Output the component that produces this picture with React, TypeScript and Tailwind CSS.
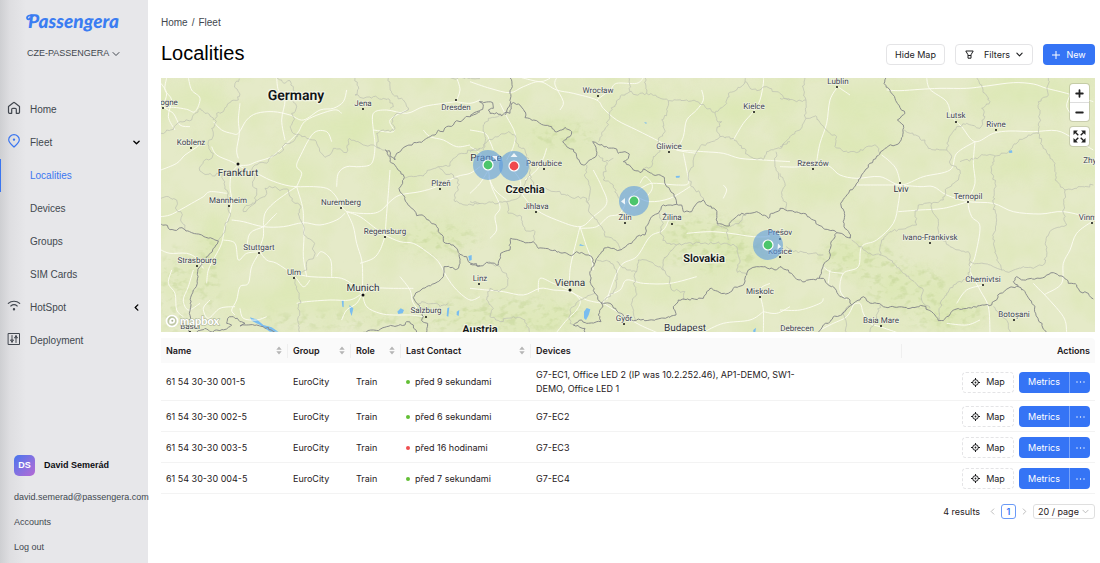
import React from "react";

type Pt = [number, number];

const parse = (s: string): Pt[] =>
  s.trim().split(/\s+/).map((p) => p.split(",").map(Number) as Pt);

/* Adds small deterministic wiggles so that borders look surveyed, not ruled. */
function rough(s: string, amp: number): string {
  const pts = parse(s);
  let seed = Math.round(pts[0][0] * 7 + pts[0][1] * 13) + 1;
  const rnd = () => {
    seed = (seed * 16807) % 2147483647;
    return seed / 2147483647 - 0.5;
  };
  rnd();
  let d = `M${pts[0][0]} ${pts[0][1]}`;
  for (let i = 1; i < pts.length; i++) {
    const [x0, y0] = pts[i - 1];
    const [x1, y1] = pts[i];
    const len = Math.hypot(x1 - x0, y1 - y0);
    const n = Math.max(1, Math.round(len / 7));
    for (let k = 1; k <= n; k++) {
      const t = k / n;
      const w = k === n ? 0 : amp;
      const x = x0 + (x1 - x0) * t + rnd() * w;
      const y = y0 + (y1 - y0) * t + rnd() * w;
      d += `L${x.toFixed(1)} ${y.toFixed(1)}`;
    }
  }
  return d;
}

/* Smooth curve through the points, for roads. */
function smooth(s: string): string {
  const p = parse(s);
  let d = `M${p[0][0]} ${p[0][1]}`;
  for (let i = 0; i < p.length - 1; i++) {
    const a = p[Math.max(0, i - 1)];
    const b = p[i];
    const c = p[i + 1];
    const e = p[Math.min(p.length - 1, i + 2)];
    d += `C${b[0] + (c[0] - a[0]) / 6} ${b[1] + (c[1] - a[1]) / 6} ${c[0] - (e[0] - b[0]) / 6} ${c[1] - (e[1] - b[1]) / 6} ${c[0]} ${c[1]}`;
  }
  return d;
}

interface Tile {
  x: number;
  countries: string[];
  regions: string[];
  roads: string[];
  water: string[];
}

const tiles: Tile[] = [
  {
    x: 160,
    countries: [
      "3,461 22,466 30,479 45,481 66,473 78,483 95,488 125,495 160,507 175,513 168,525 158,540 140,560 130,575 120,590 113,605 112,640 100,660 92,682 90,700 92,712 88,730 92,745 85,765 88,787",
      "110,787 135,775 150,785 170,780 200,777 215,765 200,760 203,745 220,740 232,745 240,755 255,760 240,768 260,765 290,765 310,770 335,780 345,787",
      "610,787 640,780 655,782 680,770 700,768 735,765 740,755 760,765 770,787",
      "800,787 803,760 785,752 790,740 780,715 760,683 775,665 800,650 825,640 850,620 852,590 870,593 890,598 900,580 897,553",
      "960,125 940,135 915,143 900,155 890,152 880,165 860,170 850,185 835,180 825,195 800,205 790,212 770,218 735,230 720,245 710,250 705,270 697,262 690,258 688,242 676,240 690,262 690,275 710,293 722,305 733,322 728,340 717,355 730,375 737,395 760,418 770,437 790,437 810,455 830,470 835,485 850,500 850,515 880,525 893,540 900,553 920,560 925,575 940,582 960,587",
    ],
    regions: [
      "238,26 225,40 228,55 240,72 235,90 215,92 200,110 190,125 170,130 165,160 155,175 160,195 145,215 150,240 160,250 155,265 130,275 118,295 130,310 150,310 165,318 185,300 190,330 195,350 205,370 198,390 205,410 210,440 195,465 190,490 175,513",
      "3,190 20,180 40,178 60,155 95,150 105,130 120,115 135,130 150,135 160,150",
      "350,23 365,30 372,40 390,32 400,60 415,72 398,90 410,110 395,130 402,150 390,170 400,190 415,192 440,205 465,210 485,250 495,262 510,255 520,235 545,240 560,248 568,205 590,215 610,225 640,225 660,235 676,240",
      "415,192 400,215 375,220 365,245 335,258 325,275 285,285 275,300 285,320 278,340 290,365 285,400 262,418 250,425",
      "250,425 255,410 285,400 300,385 318,375 315,355 345,350 360,362 385,360 390,380 405,400 420,405 418,440 430,465 432,495 460,515 462,560 440,575 440,600 415,610 400,625 410,650 420,690 415,740 418,787",
      "585,23 595,50 585,75 610,85 640,80 665,88 690,90 700,110 690,115",
      "685,23 690,50 700,75 730,90 740,110 745,120 705,135 695,160 705,175 690,185 670,180 650,190 655,215 650,225 660,235",
      "862,23 960,26",
      "733,325 760,320 790,318 810,300 835,290 870,288 880,265 905,250 960,235",
      "835,290 855,310 880,315 895,330 895,360 885,370 885,395 915,405 960,400",
      "3,385 25,380 50,390 50,420 65,430 62,450 75,465 78,483",
      "775,700 785,695 800,700 830,700 840,710 865,700",
    ],
    roads: [
      "3,40 20,70 12,110 40,130 60,165 90,170",
      "20,23 15,60 35,90 25,140 45,180",
      "3,115 40,112 80,118 105,125 120,85 95,60 85,23",
      "160,155 185,180 215,190 235,190 260,150 290,130 340,125 390,135 430,150 480,120 520,115 550,95 560,60",
      "240,100 235,150 238,190 230,240 235,265",
      "3,300 50,280 75,255 105,235 130,215",
      "155,230 170,255 215,275 235,285 265,285 290,275 335,260 370,230 412,190 440,150 520,120 545,130",
      "235,285 215,310 210,350 215,390 210,430 195,470 185,520 165,560 145,600 140,640",
      "235,285 260,300 290,310 330,330 375,345 410,350 460,350 500,355 525,375 545,410 560,425",
      "560,425 600,430 640,430 665,420 690,395 720,375 780,365 830,350 890,320 930,310 960,290",
      "560,425 580,470 590,520 605,570 608,620 607,665",
      "560,425 600,440 640,470 675,495 720,515 760,520 800,545 835,575 860,620 890,660 930,690 960,680",
      "555,430 530,450 480,465 430,458 370,470 310,470 250,455 215,450",
      "310,470 315,430 340,400 380,370 410,350",
      "310,470 310,500 300,540 320,570 350,580 400,615 430,650 450,630",
      "300,545 260,550 235,570 225,520 190,510",
      "300,545 275,590 265,640 240,650 230,690 215,720 225,735",
      "400,610 450,620 500,622 545,625 580,645 607,670 640,655 700,655 760,655",
      "607,670 570,690 510,690 440,695 410,700",
      "607,670 590,700 560,720 545,750",
      "607,670 620,710 660,730 700,735 750,735 790,740",
      "375,210 365,150 375,90 355,60 350,23",
      "640,180 640,130 680,120 740,130 790,110 850,100 888,95",
      "640,180 645,230 635,280 600,290 560,290 535,310 530,350",
      "640,180 700,185 690,150 740,120",
      "410,350 425,310 410,290 420,260 460,190 500,185 515,215",
      "410,350 425,400 430,430 430,460 432,500 430,560 440,620",
      "3,440 30,435 60,420 95,400 130,380 150,365 200,370",
      "3,540 30,550 80,550 110,565 130,595",
      "100,600 85,650 70,690 85,720 120,700",
      "35,600 25,640 45,670 50,720 70,740",
      "675,500 660,540 640,565 600,580",
      "675,500 680,430 685,370 690,300",
      "515,620 512,570 485,545 470,560",
      "795,740 760,700 750,660 720,620",
      "888,95 900,60 890,23",
      "888,95 930,100 960,90",
      "790,180 810,200 850,210 890,230 930,225",
      "150,690 130,715 145,745 180,715 225,710",
      "240,715 250,745 290,750 320,740",
      "350,430 330,450 310,470 270,490 260,540",
    ],
    water: [
      "270,742 290,748 310,765 335,772 355,785 330,785 300,765 275,752",
      "545,690 551,690 551,712 547,710",
      "568,705 580,715 575,738 570,725",
      "712,725 722,715 732,720 728,730 715,732",
      "862,715 868,712 865,740 860,738",
      "890,725 898,720 896,738 890,735",
      "925,558 935,555 935,570 928,573",
    ],
  },
  {
    x: 470,
    countries: [
      "0,137 20,125 38,118 40,105 28,95 50,96 68,98 70,115 55,120 60,130 80,128 95,138 105,128 120,130 125,100 145,102 160,118 168,135 165,143 200,152 220,165 245,170 255,185 275,180 285,172 305,185 300,200 278,215 290,230 310,238 320,260 340,285 350,280 365,268 380,255 378,232 368,215 390,225 410,230 440,237 445,250 465,245 478,252 475,265 460,275 478,285 490,300 510,308 520,297 545,310 583,322 590,350 600,360 612,372 620,403",
      "120,23 127,50 120,70 122,95 105,135",
      "620,403 580,405 565,430 545,440 528,470 525,495 500,500 485,520 450,540 410,533 395,545 380,565 373,582",
      "620,403 635,405 640,425 665,425 680,400 700,390 710,405 738,420 742,462 765,467 778,468 782,455 805,435 830,430 860,425 895,445 905,430 930,420 930,415",
      "0,582 30,588 50,577 85,585 92,550 120,540 122,505 145,510 175,518 190,515 205,535 240,540 265,545 290,550 305,557 320,545 365,560 373,582",
      "373,582 360,605 362,640 375,670 393,698",
      "393,698 420,700 445,728 485,750 540,750 600,742 618,735 610,710 625,690 700,685 710,665 725,655 750,668 775,670 790,655 820,645 830,615 835,600 860,590 885,590 915,600 930,590",
      "393,698 398,705 385,735 393,755 350,760 335,750 310,765 345,775 345,787",
    ],
    regions: [
      "475,23 480,65 455,75 435,105 420,125 410,170 395,190 385,215",
      "525,23 530,70 560,80 595,92 590,130 575,150 585,185 565,210 570,245 550,260 545,290 520,297",
      "480,65 505,75 530,70",
      "595,92 650,90 680,95 705,110 735,130 740,150 755,155 740,180 750,200 725,215 690,230 675,255 670,290 655,310 665,350 690,370 700,390",
      "735,130 750,115 770,100 775,70 800,60 825,35 840,55 870,60 890,50 915,65 960,90",
      "825,35 825,23",
      "750,200 790,205 815,235 850,265 880,268 890,245 930,235 960,215",
      "930,330 925,325 915,290 918,245",
      "40,240 45,200 40,165 55,145 95,138",
      "0,245 35,235 55,210 85,200 115,185 135,195 145,230 165,240 175,280 180,315 190,345 215,350 260,365 300,380 350,385 355,400 360,430 395,470 405,500 435,510 450,540",
      "350,285 345,320 360,350 355,400",
      "385,255 405,275 430,265",
      "410,275 400,330 430,345 440,370 445,385",
      "0,395 50,400 110,395 115,430 155,440 165,480 195,485 190,515",
      "110,395 150,380 180,315",
      "565,430 580,460 570,490 590,520 620,525",
      "620,525 650,520 700,520 770,520 800,530 810,570 800,600 830,615",
      "740,465 770,475 775,510",
      "620,525 600,545 580,570 580,600 600,630 605,660 645,665 640,690",
      "380,570 420,575 440,600 440,640 430,670 395,698",
      "440,575 470,600 500,605 505,570 540,575 580,600",
      "500,605 490,640 500,670 485,700 495,750",
      "50,577 90,590 115,625 110,650 85,665 60,655 50,690 70,715 60,740 90,755 130,740 165,750 180,787",
      "375,670 330,690 300,720 300,760 310,765",
      "830,430 810,455 780,470",
    ],
    roads: [
      "0,35 60,55 120,68 160,50 210,35 260,60 310,70 380,90 400,115 440,150 500,180 570,215 620,240 680,250",
      "155,23 210,35 240,25",
      "270,120 280,95 255,45 260,23",
      "380,90 420,60 440,40 500,40 520,23",
      "620,240 640,200 650,150 680,120 700,90 695,60",
      "640,250 650,300 655,340 620,345 560,340 530,345 480,380 450,430 415,440 380,470 330,475",
      "620,240 700,245 760,250 810,265 880,270 960,275",
      "790,210 820,160 850,125 870,90 880,40 880,23",
      "120,290 150,330 155,370 200,420 260,450 330,470 370,440 410,400 395,350 370,300",
      "330,470 340,500 350,530 365,570 370,600",
      "330,470 320,510 310,550 300,600 298,660",
      "55,300 30,340 0,370",
      "55,300 65,350 90,410 75,440 80,480 60,505",
      "165,330 200,300 220,265 230,235",
      "0,655 50,660 100,665 160,675 210,655 250,660 298,665 350,690 400,700",
      "298,660 250,640 210,625 205,665",
      "298,660 330,690 320,720 290,750 260,787",
      "400,700 410,680 450,660 470,630 520,640 600,640 680,620",
      "400,700 450,730 510,765 560,787",
      "650,490 720,485 780,490 850,500 900,500",
      "600,440 580,480 540,500 500,560 450,590 410,690",
      "880,787 880,720 870,660 900,640",
      "880,725 920,730 960,710",
      "880,725 840,750 760,760 700,787",
      "70,240 60,215 45,190 0,180",
      "110,270 130,230 135,190 110,140 90,100",
      "510,340 525,320 545,340 545,360 530,380",
      "0,230 30,250 50,280",
      "110,390 75,360 55,320",
      "500,380 540,395 600,385 660,350",
      "760,345 770,360 760,385",
    ],
    water: [
      "342,725 350,714 361,718 356,735 348,750 342,745",
      "330,522 345,528 328,527",
      "522,156 531,158 528,162",
      "617,318 630,317 628,323 618,323",
      "850,780 858,773 856,787 850,787",
    ],
  },
  {
    x: 780,
    countries: [
      "318,23 312,40 330,60 345,85 352,100 375,130 352,150 370,165 368,200 355,222 325,228 270,280 235,335 182,400 193,430 192,470 212,495 210,505",
      "0,415 30,422 70,430 100,450 130,475 170,488 212,503",
      "170,488 152,520 150,560 130,585 118,625",
      "0,590 25,600 50,628 75,635 100,628 118,625 130,625 140,640 165,655 180,680 205,685 215,705",
      "215,705 185,735 160,740 145,760 130,765 115,787",
      "215,705 240,690 250,680 265,695 290,700 310,710 350,712 390,715 430,708 445,720 455,725 475,752 490,752 520,720 580,710 635,705 660,670 690,652 715,650",
      "715,650 735,665 760,705 775,750 800,787",
      "715,650 700,635 710,620 730,630 780,625 820,608 850,620 865,640 890,645 900,665 925,670 940,687",
    ],
    regions: [
      "75,23 70,55 78,90 75,150 60,180 30,200 0,230",
      "0,85 25,90 50,95 78,90",
      "78,145 110,140 125,165 145,185 170,200 165,230 190,245 230,248 260,230 290,228 300,250",
      "0,310 15,340 5,380 20,400 18,420",
      "372,180 400,195 435,210 445,235 500,240 508,200 530,170 560,160 600,175 615,140 605,115 630,95 615,70 605,45 590,23",
      "500,240 515,260 510,280 540,300 535,330 500,355 490,390 455,400 415,405 405,440 410,465 330,485 305,510 300,555 265,550 245,530 215,510",
      "540,275 580,268 610,255 645,258 680,250 715,215 745,195 775,190 780,130 775,95 805,75 805,23",
      "645,258 635,300 645,340 640,400 650,450 640,500 650,570 665,600 690,605 730,590 760,595 795,580 800,500 815,480 860,465 850,430 855,360 825,330 825,280 790,235 775,190",
      "855,360 890,355 940,345",
      "455,400 460,430 475,455 475,490 510,530 565,545 570,575 640,590 665,600",
      "570,575 565,625 520,645 500,670 485,690 475,752",
      "300,555 330,570 370,610 395,630 430,660 425,690 450,715",
      "210,705 190,725 200,787",
      "640,710 660,735 685,760 690,787",
      "300,705 290,740 270,787",
      "18,530 40,545 80,548 130,555",
    ],
    roads: [
      "320,60 360,62 420,58 480,55 560,55 620,48 700,38 760,42 800,55 860,70 940,95",
      "440,23 450,58 500,95 515,140 545,170 585,215 640,190 690,183 760,185 830,182 880,205 940,240",
      "585,215 580,280 585,340 565,395 575,440 600,470 585,560 570,600 600,660 625,710 630,787",
      "0,290 60,290 110,275 150,290 180,315 230,325 300,320 362,345 430,320 510,300 530,250 585,215",
      "362,345 300,345 230,345",
      "362,345 420,350 460,350 500,375 565,395 640,400 700,425 780,432 850,425 940,445",
      "362,345 350,300 330,275 305,255",
      "362,345 355,400 340,460 290,510 245,530 235,590 190,610 180,660 200,690",
      "355,425 420,420 490,415 565,395",
      "173,50 150,90 140,160 120,220 110,275",
      "173,50 210,75",
      "130,590 150,605 190,610",
      "150,600 145,640",
      "0,720 60,720 120,700 130,685",
      "215,705 240,700 250,730 270,760 300,770 350,787",
      "120,780 160,760 200,740 220,705",
      "935,455 890,490 870,540 850,580 845,640 800,670 790,670 760,640",
      "790,670 850,740 860,787",
      "500,760 560,765 600,750",
      "530,700 560,660 610,645",
      "880,140 860,110 870,75",
    ],
    water: ["686,242 696,241 697,248 688,249"],
  },
];

interface Place {
  name: string;
  x: number;
  y: number;
  size: number;
  bold?: boolean;
  dot?: Pt;
}

const places: Place[] = [
  { name: "Germany", x: 296, y: 100, size: 14, bold: true },
  { name: "Czechia", x: 525, y: 193, size: 11, bold: true },
  { name: "Slovakia", x: 704, y: 262, size: 11, bold: true },
  { name: "Austria", x: 480, y: 333, size: 11, bold: true },
  { name: "ogne", x: 169, y: 105, size: 8, dot: [163, 108] },
  { name: "Koblenz", x: 191, y: 145, size: 8, dot: [191, 148] },
  { name: "Frankfurt", x: 238, y: 176, size: 10, dot: [238, 164] },
  { name: "Mannheim", x: 228, y: 203, size: 8, dot: [229, 206] },
  { name: "Strasbourg", x: 197, y: 263, size: 8, dot: [197, 266] },
  { name: "Stuttgart", x: 259, y: 250, size: 8, dot: [259, 253] },
  { name: "Ulm", x: 294, y: 275, size: 8, dot: [294, 278] },
  { name: "Munich", x: 363, y: 291, size: 10, dot: [363, 295] },
  { name: "Nuremberg", x: 341, y: 205, size: 8, dot: [341, 208] },
  { name: "Regensburg", x: 385, y: 234, size: 8, dot: [385, 237] },
  { name: "Jena", x: 363, y: 106, size: 8, dot: [363, 109] },
  { name: "Dresden", x: 456, y: 110, size: 8, dot: [456, 100] },
  { name: "Plzeň", x: 441, y: 186, size: 8, dot: [440, 189] },
  { name: "Salzburg", x: 426, y: 313, size: 8, dot: [426, 317] },
  { name: "Basel", x: 190, y: 329, size: 8, dot: [190, 332] },
  { name: "Prague", x: 486, y: 161, size: 10 },
  { name: "Pardubice", x: 544, y: 166, size: 8, dot: [544, 169] },
  { name: "Jihlava", x: 536, y: 209, size: 8, dot: [536, 212] },
  { name: "Wrocław", x: 598, y: 93, size: 8, dot: [598, 96] },
  { name: "Gliwice", x: 669, y: 149, size: 8, dot: [669, 152] },
  { name: "Kielce", x: 754, y: 109, size: 8, dot: [754, 112] },
  { name: "Zlín", x: 625, y: 220, size: 8, dot: [625, 223] },
  { name: "Žilina", x: 672, y: 220, size: 8, dot: [672, 224] },
  { name: "Prešov", x: 780, y: 235, size: 8, dot: [780, 239] },
  { name: "Košice", x: 780, y: 254, size: 8, dot: [780, 257] },
  { name: "Linz", x: 480, y: 281, size: 8, dot: [479, 284] },
  { name: "Vienna", x: 570, y: 286, size: 10, dot: [570, 290] },
  { name: "Győr", x: 624, y: 321, size: 8, dot: [624, 324] },
  { name: "Budapest", x: 685, y: 331, size: 10 },
  { name: "Miskolc", x: 760, y: 294, size: 8, dot: [760, 297] },
  { name: "Debrecen", x: 797, y: 331, size: 8 },
  { name: "Lublin", x: 838, y: 84, size: 8, dot: [837, 87] },
  { name: "Lutsk", x: 956, y: 118, size: 8, dot: [956, 122] },
  { name: "Rivne", x: 996, y: 127, size: 8, dot: [996, 130] },
  { name: "Rzeszów", x: 813, y: 166, size: 8, dot: [813, 169] },
  { name: "Lviv", x: 901, y: 192, size: 9, dot: [900, 183] },
  { name: "Ternopil", x: 968, y: 199, size: 8, dot: [968, 202] },
  { name: "Ivano-Frankivsk", x: 930, y: 240, size: 8, dot: [930, 243] },
  { name: "Chernivtsi", x: 983, y: 282, size: 8, dot: [983, 285] },
  { name: "Botoșani", x: 1014, y: 317, size: 8, dot: [1014, 320] },
  { name: "Baia Mare", x: 881, y: 323, size: 8, dot: [881, 326] },
  { name: "Zhytomyr", x: 1100, y: 163, size: 8 },
  { name: "Vinnytsia", x: 1095, y: 220, size: 8, dot: [1092, 223] },
];

const forests: number[][] = [
  [190, 100, 40, 14], [345, 130, 60, 18], [300, 175, 30, 16], [215, 250, 16, 40],
  [430, 235, 44, 14], [300, 300, 90, 16], [460, 130, 50, 10], [540, 130, 45, 12],
  [575, 150, 30, 12], [640, 110, 40, 14], [720, 110, 34, 20], [700, 235, 50, 14],
  [735, 260, 46, 14], [510, 318, 80, 14], [640, 175, 28, 14], [660, 290, 30, 12],
  [870, 105, 50, 22], [820, 190, 40, 12], [860, 255, 34, 16], [905, 288, 40, 18],
  [1030, 95, 60, 20], [1000, 165, 46, 12], [945, 310, 34, 14], [775, 100, 30, 14],
  [1060, 165, 50, 10], [400, 170, 30, 12], [590, 245, 30, 10], [835, 140, 60, 12],
];

const ridges: number[][] = [
  [175, 290, 14, 44], [207, 275, 12, 40], [440, 240, 40, 16], [500, 314, 90, 18],
  [470, 318, 60, 14], [705, 228, 45, 12], [715, 252, 50, 18], [860, 260, 45, 18],
  [905, 285, 42, 22], [945, 315, 40, 14], [565, 135, 34, 12], [345, 320, 90, 8],
];

const markers = [
  { x: 488, y: 165, color: "#4cc56b", arrow: "M492 156h5v5z" },
  { x: 514, y: 166, color: "#f0484c", arrow: "M510.500 157l3.500-4 3.500 4z" },
  { x: 634, y: 201, color: "#4cc56b", arrow: "M625 198v6.500l-4-3z" },
  { x: 768, y: 245, color: "#4cc56b", arrow: "M778 243.500l3 3-3.500 3z" },
];

function MapView() {
  return (
    <section aria-label="Map" className="relative h-[254px] overflow-hidden bg-[#e5eac8]">
      <svg
        viewBox="161 78 934 254"
        preserveAspectRatio="xMidYMid slice"
        className="block h-full w-full"
        aria-hidden="true"
      >
        <defs>
          <filter id="soft" x="-50%" y="-50%" width="200%" height="200%">
            <feGaussianBlur stdDeviation="9" />
          </filter>
          <filter id="land" x="0" y="0" width="100%" height="100%" colorInterpolationFilters="sRGB">
            <feTurbulence type="fractalNoise" baseFrequency="0.03" numOctaves="3" seed="4" />
            <feColorMatrix values="0 0 0 0 0.84 0 0 0 0 0.9 0 0 0 0 0.66 2 0 0 0 -0.75" />
          </filter>
          <filter id="relief" x="-20%" y="-20%" width="140%" height="140%" colorInterpolationFilters="sRGB">
            <feTurbulence type="fractalNoise" baseFrequency="0.11 0.16" numOctaves="3" seed="9" result="n" />
            <feColorMatrix in="n" values="0 0 0 0 0.76 0 0 0 0 0.83 0 0 0 0 0.58 4 0 0 0 -2" result="c" />
            <feGaussianBlur in="SourceAlpha" stdDeviation="5" result="m" />
            <feComposite in="c" in2="m" operator="in" />
          </filter>
        </defs>
        <rect x="161" y="78" width="934" height="254" fill="#e5eac8" />
        <rect x="161" y="78" width="934" height="254" filter="url(#land)" opacity="0.4" />
        <g filter="url(#soft)" fill="#d8e7ac" opacity="0.45">
          {forests.map(([x, y, rx, ry]) => (
            <ellipse key={`${x}-${y}`} cx={x} cy={y} rx={rx} ry={ry} />
          ))}
        </g>
        <g filter="url(#relief)" opacity="0.5">
          {ridges.map(([x, y, rx, ry]) => (
            <ellipse key={`${x}-${y}`} cx={x} cy={y} rx={rx} ry={ry} />
          ))}
        </g>
        {tiles.map((t) => (
          <g key={t.x} transform={`translate(${t.x} 70) scale(0.33333)`} fill="none" strokeLinejoin="round">
            {t.water.map((w) => (
              <polygon key={w} points={w} fill="#79bdf0" />
            ))}
            {t.roads.map((r) => (
              <path key={r} d={smooth(r)} stroke="#fcfcf1" strokeWidth="3" opacity="0.95" />
            ))}
            {t.regions.map((r) => (
              <path key={r} d={rough(r, 8)} stroke="#b9bcb1" strokeWidth="2" />
            ))}
            {t.countries.map((c) => (
              <path key={c} d={rough(c, 6)} stroke="#87898b" strokeWidth="2.900" />
            ))}
          </g>
        ))}
        <g
          textAnchor="middle"
          textRendering="geometricPrecision"
          fontFamily="Roboto, 'Noto Sans', sans-serif"
          stroke="#f1f4e2"
          strokeLinejoin="round"
          paintOrder="stroke"
        >
          {places.map((p) => (
            <g key={p.name}>
              {p.dot && (
                <circle cx={p.dot[0]} cy={p.dot[1]} r={p.size > 9 ? 1.5 : 1} fill="#111" stroke="none" />
              )}
              <text
                x={p.x}
                y={p.y}
                fontSize={p.size}
                fontWeight={p.bold ? 600 : 400}
                fill={p.bold ? "#111418" : p.size > 8 ? "#30353f" : "#3f4452"}
                strokeWidth={p.bold ? 2.5 : 1.5}
              >
                {p.name}
              </text>
            </g>
          ))}
        </g>
        {markers.map((m) => (
          <g key={m.x}>
            <circle cx={m.x} cy={m.y} r="15" fill="#5b9be0" opacity="0.6" />
            <path d={m.arrow} fill="#fff" opacity="0.85" />
            <circle cx={m.x} cy={m.y} r="5" fill={m.color} stroke="#fff" strokeWidth="1.200" />
          </g>
        ))}
        <g>
          <circle cx="172" cy="321" r="5.500" fill="#9ba585" fillOpacity="0.5" stroke="#fff" strokeWidth="1.700" />
          <path d="M169.500 323.500c-.8-3.500.6-5.600 2.800-5.600a2.800 2.800 0 0 1 2.800 2.800c0 2.300-2.100 3.600-5.600 2.800z" fill="#fff" />
          <circle cx="172.300" cy="320.700" r="1" fill="#a5ad90" />
          <text
            x="180"
            y="325"
            fontFamily="Lato, sans-serif"
            fontWeight="900"
            fontSize="11"
            fill="#fff"
            stroke="#a3ab8e"
            strokeWidth="1"
            paintOrder="stroke"
          >
            mapbox
          </text>
        </g>
      </svg>
      <div className="absolute right-[6px] top-[6px] flex flex-col gap-[6px]">
        <div className="flex w-[19px] flex-col overflow-hidden rounded-[3px] bg-white shadow-[0_0_0_1px_rgba(0,0,0,0.12)]">
          <button type="button" aria-label="Zoom in" className="flex h-[19px] items-center justify-center border-b border-[#dddddd]">
            <svg viewBox="0 0 9 9" className="size-[9px]" stroke="#222" strokeWidth="1.800" strokeLinecap="round">
              <path d="M4.500 1.200v6.600M1.200 4.500h6.600" />
            </svg>
          </button>
          <button type="button" aria-label="Zoom out" className="flex h-[18px] items-center justify-center">
            <svg viewBox="0 0 9 9" className="size-[9px]" stroke="#222" strokeWidth="1.800" strokeLinecap="round">
              <path d="M1.200 4.500h6.600" />
            </svg>
          </button>
        </div>
        <button
          type="button"
          aria-label="Full screen"
          className="flex size-[19px] items-center justify-center rounded-[3px] bg-white shadow-[0_0_0_1px_rgba(0,0,0,0.12)]"
        >
          <svg viewBox="0 0 13 13" className="size-[13px]" fill="#222" stroke="#222" strokeWidth="1.400">
            <path d="M1.500 1.500l3.800 3.800M11.500 1.500L7.700 5.300M1.500 11.500l3.800-3.800M11.500 11.500L7.700 7.700" />
            <path stroke="none" d="M.5.5h4.400L.5 4.900zM12.500.5v4.400L8.100.5zM.5 12.500V8.100l4.400 4.400zM12.500 12.500H8.100l4.400-4.400z" />
          </svg>
        </button>
      </div>
    </section>
  );
}

function Chevron({ className }: { className: string }) {
  return (
    <svg viewBox="0 0 8 8" className={className} fill="none" stroke="currentColor" strokeLinecap="round" strokeLinejoin="round">
      <path d="M1 2.500l3 3 3-3" />
    </svg>
  );
}

const iconProps = {
  viewBox: "0 0 14 14",
  className: "size-[14px]",
  fill: "none",
  stroke: "currentColor",
  strokeWidth: 1.2,
  strokeLinecap: "round" as const,
  strokeLinejoin: "round" as const,
  "aria-hidden": true,
};

const HomeIcon = () => (
  <svg {...iconProps}>
    <path d="M1.500 5.400L6.300 1.700a1.100 1.100 0 0 1 1.400 0l4.800 3.700v5.900a1 1 0 0 1-1 1H9.300V8.500A1.200 1.200 0 0 0 8.100 7.300H5.900a1.200 1.200 0 0 0-1.200 1.200v3.800H2.500a1 1 0 0 1-1-1z" />
  </svg>
);
const PinIcon = () => (
  <svg {...iconProps} className="size-[14px] text-[#3b76f0]">
    <path d="M7 13C4.600 10.800 1.700 8.800 1.700 5.800a5.300 5.100 0 0 1 10.600 0C12.300 8.800 9.400 10.800 7 13z" />
    <circle cx="7" cy="5.600" r=".6" fill="currentColor" />
  </svg>
);
const WifiIcon = () => (
  <svg {...iconProps}>
    <path d="M1.300 4.400c3.200-2.900 8.200-2.900 11.400 0M3.800 7c1.900-1.500 4.500-1.500 6.400 0" />
    <circle cx="7" cy="10.300" r=".6" fill="currentColor" />
  </svg>
);
const SlidersIcon = () => (
  <svg {...iconProps} strokeWidth={1}>
    <path d="M1.500 1.500h11v11h-11zM5 3.500v7M9 3.500v7M3.700 8.300L5 10l1.300-1.700zM7.700 5.500L9 3.800l1.300 1.700z" />
  </svg>
);

interface Item {
  label: string;
  icon?: React.ReactNode;
  active?: boolean;
  open?: boolean;
}

const nav: Item[] = [
  { label: "Home", icon: <HomeIcon /> },
  { label: "Fleet", icon: <PinIcon />, open: true },
  { label: "Localities", active: true },
  { label: "Devices" },
  { label: "Groups" },
  { label: "SIM Cards" },
  { label: "HotSpot", icon: <WifiIcon />, open: false },
  { label: "Deployment", icon: <SlidersIcon /> },
];

function Sidebar() {
  return (
    <aside className="flex w-[148px] shrink-0 flex-col bg-[#e7e7ea] bg-[linear-gradient(to_right,#cecfd2_0px,#dedee1_10px,#e7e7ea_26px)] font-['Liberation_Sans',Arial,sans-serif] text-[#42474f]">
      <a href="#home" aria-label="Passengera" className="mt-[10px] self-start pl-[24px]">
        <svg viewBox="0 0 104 26" className="h-[26px] w-[104px]" fill="#3b7df2">
          <text x="4" y="18" fontFamily="Lato, sans-serif" fontStyle="italic" fontWeight="900" fontSize="19" textRendering="geometricPrecision">
            Passengera
          </text>
          <path
            d="M9 6C5.500 4.600 2.600 6 3.100 8.400c.3 1.500 2.300 1.300 2.300 0"
            fill="none"
            stroke="#3b7df2"
            strokeWidth="1.800"
            strokeLinecap="round"
          />
        </svg>
      </a>
      <button type="button" className="mt-3 flex h-3 items-center gap-[3px] pl-[27px] text-[9px]">
        CZE-PASSENGERA
        <Chevron className="size-2" />
      </button>
      <nav className="mt-[33px]">
        <ul>
          {nav.map((n) => (
            <li key={n.label}>
              <a
                href={`#${n.label}`}
                className={
                  n.active
                    ? "flex h-[33px] items-center border-l border-[#3b76f0] pl-[6px] pr-2 text-[10px] text-[#3b76f0]"
                    : "flex h-[33px] items-center border-l border-transparent pl-[6px] pr-2 text-[10px]"
                }
              >
                <span className="mr-[9px] flex w-[14px] shrink-0 pb-[3px]">{n.icon}</span>
                <span className="grow">{n.label}</span>
                {n.open !== undefined && (
                  <Chevron
                    className={
                      n.open ? "size-[7px] stroke-[1.500px] text-black" : "size-[7px] rotate-90 stroke-[1.500px] text-black"
                    }
                  />
                )}
              </a>
            </li>
          ))}
        </ul>
      </nav>
      <div className="mt-auto pb-[3px] pl-[14px] text-[9px]">
        <div className="mb-[9px] flex items-center gap-[9px]">
          <span className="flex size-[21px] items-center justify-center rounded-[5px] bg-linear-to-br from-[#3f74ee] to-[#b468d4] font-bold text-white">
            DS
          </span>
          <span className="font-bold text-[#0c0d12]">David Semerád</span>
        </div>
        <div className="flex h-[25px] items-center">david.semerad@passengera.com</div>
        <a href="#accounts" className="flex h-[25px] items-center">Accounts</a>
        <a href="#logout" className="flex h-[25px] items-center">Log out</a>
      </div>
    </aside>
  );
}

const rows = [
  { name: "61 54 30-30 001-5", ok: true, seen: "před 9 sekundami", devices: "G7-EC1, Office LED 2 (IP was 10.2.252.46), AP1-DEMO, SW1-DEMO, Office LED 1" },
  { name: "61 54 30-30 002-5", ok: true, seen: "před 6 sekundami", devices: "G7-EC2" },
  { name: "61 54 30-30 003-5", ok: false, seen: "před 16 hodinami", devices: "G7-EC3" },
  { name: "61 54 30-30 004-5", ok: true, seen: "před 7 sekundami", devices: "G7-EC4" },
];

const columns = [
  { label: "Name", width: "w-[127px]", sort: true },
  { label: "Group", width: "w-[63px]", sort: true },
  { label: "Role", width: "w-[50px]", sort: true },
  { label: "Last Contact", width: "w-[130px]", sort: true },
  { label: "Devices", width: "", sort: false },
];

const button =
  "flex h-[21px] items-center justify-center rounded-[4px] border border-[#e4e4e6] bg-white text-[9px] text-[#1c1d1f]";

function LocalityTable() {
  return (
    <table className="mt-[6px] w-full table-fixed border-separate border-spacing-0 text-left text-[9px] text-[#1f2022]">
      <thead>
        <tr>
          {columns.map((c) => (
            <th key={c.label} scope="col" className={`${c.width} h-[25px] bg-[#fafafa] p-0 font-semibold`}>
              <div className="flex h-[14px] items-center justify-between border-r border-[#efefef] pl-[5px] pr-[5px]">
                {c.label}
                {c.sort && (
                  <svg viewBox="0 0 6 9" className="h-[9px] w-[6px]" fill="#b5b5b5" aria-hidden="true">
                    <path d="M3 .5L5.700 3.700H.3zM3 8.500L.3 5.300h5.400z" />
                  </svg>
                )}
              </div>
            </th>
          ))}
          <th scope="col" className="h-[25px] w-[193px] rounded-tr-[4px] bg-[#fafafa] p-0 pr-[5px] text-right font-semibold">
            Actions
          </th>
        </tr>
      </thead>
      <tbody>
        {rows.map((r) => (
          <tr key={r.name} className="*:h-[31px] *:border-b *:border-[#f3f3f3] *:px-[5px] *:pb-[4px] *:pt-[5px]">
            <td>{r.name}</td>
            <td>EuroCity</td>
            <td>Train</td>
            <td>
              <span className="flex items-center gap-[5px]">
                <span className={r.ok ? "size-[4px] rounded-full bg-[#62bf35]" : "size-[4px] rounded-full bg-[#ef4e50]"} />
                {r.seen}
              </span>
            </td>
            <td>
              <p className="max-w-[270px] leading-[14px]">{r.devices}</p>
            </td>
            <td>
              <div className="flex justify-end gap-[5px]">
                <button type="button" className={`${button} w-[52px] gap-[6px] border-dashed`}>
                  <svg viewBox="0 0 9 9" className="size-[9px]" fill="none" stroke="currentColor" aria-hidden="true">
                    <circle cx="4.500" cy="4.500" r="2.800" />
                    <circle cx="4.500" cy="4.500" r=".9" fill="currentColor" stroke="none" />
                    <path d="M4.500 0v2M4.500 7v2M0 4.500h2M7 4.500h2" />
                  </svg>
                  Map
                </button>
                <div className="flex h-[21px] overflow-hidden rounded-[4px] bg-[#3574f5] text-white">
                  <button type="button" className="w-[50px]">Metrics</button>
                  <button type="button" aria-label="More actions" className="flex w-[21px] items-center justify-center border-l border-[#78a4fa]">
                    <svg viewBox="0 0 9 2" className="h-[2px] w-[9px]" fill="currentColor">
                      <circle cx="1" cy="1" r=".7" />
                      <circle cx="4.500" cy="1" r=".7" />
                      <circle cx="8" cy="1" r=".7" />
                    </svg>
                  </button>
                </div>
              </div>
            </td>
          </tr>
        ))}
      </tbody>
    </table>
  );
}

export default function App() {
  return (
    <div className="flex min-h-screen bg-white">
      <Sidebar />
      <main className="min-w-0 grow pl-[13px] pr-[5px] pt-[15px] font-['Inter',sans-serif]">
        <nav aria-label="Breadcrumb" className="flex h-[14px] items-center gap-1 font-['Liberation_Sans',Arial,sans-serif] text-[10px] text-[#42474f]">
          <a href="#home">Home</a>
          <span>/</span>
          <a href="#fleet">Fleet</a>
        </nav>
        <header className="flex h-[49px] items-center justify-between pb-[1px]">
          <h1 className="font-['Liberation_Sans',Arial,sans-serif] text-[20px] leading-6 text-black">Localities</h1>
          <div className="flex gap-[10px] pt-[3px]">
            <button type="button" className={`${button} w-[59px]`}>Hide Map</button>
            <button type="button" className={`${button} w-[78px]`}>
              <svg viewBox="0 0 9 9" className="mr-[10px] size-[9px]" fill="none" stroke="currentColor" strokeLinejoin="round" aria-hidden="true">
                <path d="M.8 1h7.400L6 4.800v3.400H3V4.800zM3 5.500h3" />
              </svg>
              Filters
              <Chevron className="ml-[6px] size-[7px] stroke-[1.300px]" />
            </button>
            <button type="button" className="flex h-[21px] w-[52px] items-center justify-center gap-[6px] rounded-[4px] bg-[#3574f5] text-[9px] text-white">
              <svg viewBox="0 0 8 8" className="size-2" stroke="currentColor" aria-hidden="true">
                <path d="M4 0v8M0 4h8" />
              </svg>
              New
            </button>
          </div>
        </header>
        <MapView />
        <LocalityTable />
        <div className="mt-[10px] flex items-center justify-end text-[9px] text-[#1f2022]">
          <span className="mr-[9px]">4 results</span>
          <button type="button" aria-label="Previous page" className="text-[#b5b5b5]">
            <Chevron className="size-[7px] rotate-90" />
          </button>
          <button type="button" className="mx-[5px] flex size-[15px] items-center justify-center rounded-[3px] border border-[#6a9af7] font-semibold text-[#3574f5]">
            1
          </button>
          <button type="button" aria-label="Next page" className="text-[#b5b5b5]">
            <Chevron className="size-[7px] -rotate-90" />
          </button>
          <div className="relative ml-[5px]">
            <select
              aria-label="Rows per page"
              className="block h-[15px] w-[62px] appearance-none rounded-[3px] border border-[#dfdfdf] bg-white pl-[4px] text-[9px] leading-[13px]"
            >
              <option>20 / page</option>
            </select>
            <Chevron className="pointer-events-none absolute right-[6px] top-[4px] size-[7px] text-[#b5b5b5]" />
          </div>
        </div>
      </main>
    </div>
  );
}
